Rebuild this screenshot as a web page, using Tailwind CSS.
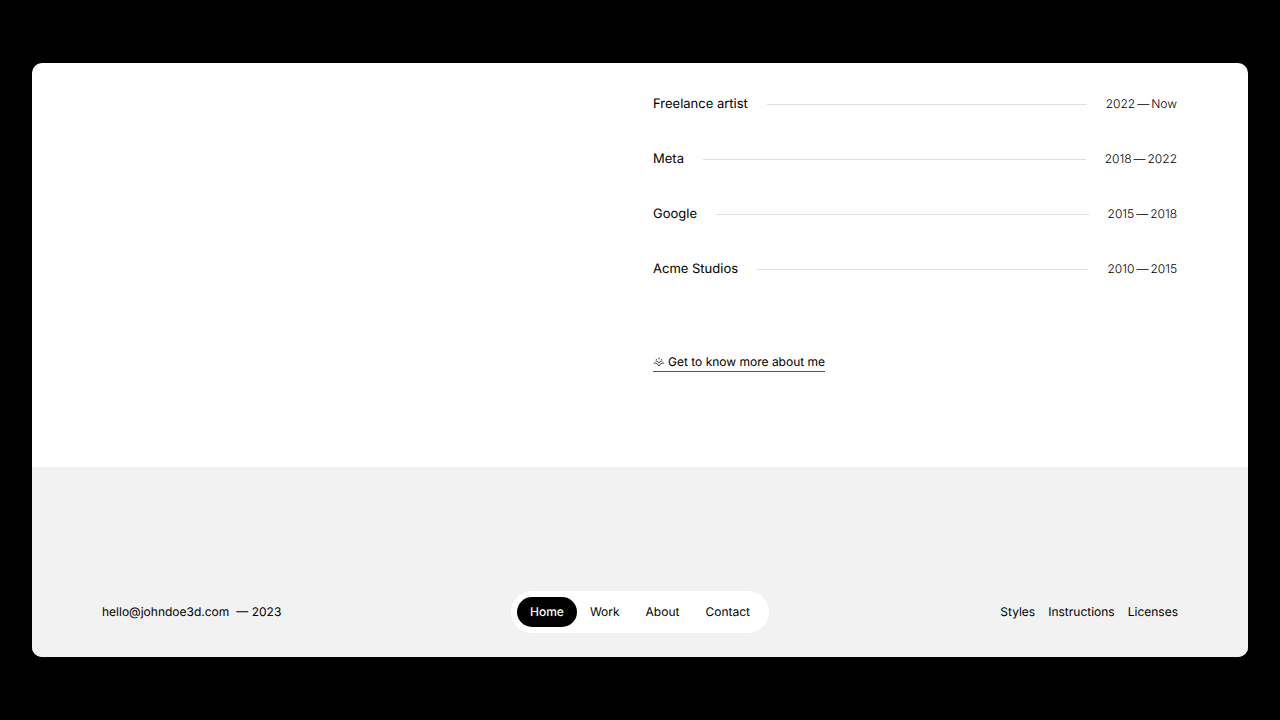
<!DOCTYPE html>
<html lang="en">
<head>
<meta charset="utf-8">
<meta name="viewport" content="width=device-width, initial-scale=1">
<title>John Doe 3D</title>
<script src="https://cdn.jsdelivr.net/npm/@tailwindcss/browser@4"></script>
</head>
<body class="flex min-h-screen flex-col bg-black px-8 py-[63px] font-['Inter',sans-serif] text-xs leading-5 text-black [text-rendering:geometricPrecision]">
  <div class="flex grow flex-col overflow-hidden rounded-[10px] bg-white">
    <main class="grid grow grid-cols-2 px-[71px] pt-[31px] pb-20">
      <section class="col-start-2 ml-[13px]" aria-label="Experience">
        <ul class="flex flex-col gap-[35px]">
          <li class="flex items-center gap-[19px]">
            <span class="text-[13px] leading-5">Freelance artist</span>
            <span class="h-px grow bg-[#dedede]"></span>
            <span class="flex gap-0.5 font-light"><span>2022</span><span>—</span><span>Now</span></span>
          </li>
          <li class="flex items-center gap-[19px]">
            <span class="text-[13px] leading-5">Meta</span>
            <span class="h-px grow bg-[#dedede]"></span>
            <span class="flex gap-0.5 font-light"><span>2018</span><span>—</span><span>2022</span></span>
          </li>
          <li class="flex items-center gap-[19px]">
            <span class="text-[13px] leading-5">Google</span>
            <span class="h-px grow bg-[#dedede]"></span>
            <span class="flex gap-0.5 font-light"><span>2015</span><span>—</span><span>2018</span></span>
          </li>
          <li class="flex items-center gap-[19px]">
            <span class="text-[13px] leading-5">Acme Studios</span>
            <span class="h-px grow bg-[#dedede]"></span>
            <span class="flex gap-0.5 font-light"><span>2010</span><span>—</span><span>2015</span></span>
          </li>
        </ul>
        <a href="#about" class="mt-[74px] inline-flex items-center gap-[3px] border-b border-[#555] leading-[18px]">
          <svg class="size-3" viewBox="0 0 12 12" fill="none" stroke="#222" stroke-width="0.9" aria-hidden="true">
            <path d="M6 1.4V3.4M2.8 2.8L3.8 3.8M9.2 2.8L8.2 3.8M2.6 5C4.4 5 5.6 5.8 6 7C6.4 5.8 7.6 5 9.4 5M0.8 7C3.4 7 5.4 8.2 6 10C6.6 8.2 8.6 7 11.2 7"/>
          </svg>
          <span>Get to know more about me</span>
        </a>
      </section>
    </main>
    <footer class="grid grid-cols-[1fr_auto_1fr] items-center bg-[#f2f2f2] px-[70px] pt-[124px] pb-6">
      <p class="flex gap-[7px]"><a href="mailto:hello@johndoe3d.com">hello@johndoe3d.com</a><span>— 2023</span></p>
      <nav class="flex rounded-full bg-white p-[6px]" aria-label="Main">
        <a href="#home" aria-current="page" class="rounded-full bg-black px-[13px] py-[5px] font-medium text-white">Home</a>
        <a href="#work" class="px-[13px] py-[5px]">Work</a>
        <a href="#about" class="px-[13px] py-[5px]">About</a>
        <a href="#contact" class="px-[13px] py-[5px]">Contact</a>
      </nav>
      <div class="flex justify-end gap-[13px]">
        <a href="#styles">Styles</a>
        <a href="#instructions">Instructions</a>
        <a href="#licenses">Licenses</a>
      </div>
    </footer>
  </div>
</body>
</html>
